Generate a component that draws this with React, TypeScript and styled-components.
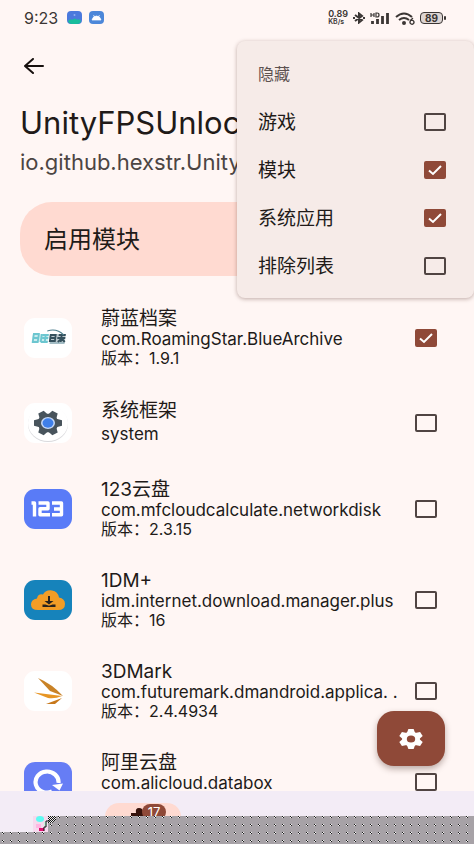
import React, { useState } from "react";
import styled, { createGlobalStyle } from "styled-components";

const fonts = `Inter, "Noto Sans CJK SC", sans-serif`;

const Global = createGlobalStyle`
  *, *::before, *::after { box-sizing: border-box; }
  body { margin: 0; background: #fff6f4; color: #211a18; font-family: ${fonts}; }
  h1, h2, p, ul { margin: 0; padding: 0; font-weight: 400; }
  button, input { font: inherit; color: inherit; }
`;

const Screen = styled.div`
  position: relative;
  display: flex;
  flex-direction: column;
  height: 100vh;
  overflow: hidden;
`;

const StatusBar = styled.header`
  display: flex;
  align-items: center;
  flex: none;
  gap: 8px;
  height: 36px;
  padding: 0 28px 0 24px;
  color: #3b3634;
`;

const Clock = styled.time`
  font-size: 16px;
  margin-right: 1px;
`;

const Spacer = styled.span`
  flex: 1;
`;

const Speed = styled.span`
  display: flex;
  flex-direction: column;
  font-size: 9px;
  font-weight: 600;
  line-height: 8px;
`;

const SpeedUnit = styled.small`
  font-size: 7px;
  line-height: 8px;
`;

const StatusIcons = styled.div`
  display: flex;
  align-items: center;
  gap: 5px;
`;

const Battery = styled.span`
  position: relative;
  display: flex;
  align-items: center;
  justify-content: center;
  width: 23px;
  height: 12px;
  margin-right: 3px;
  border: 1px solid #3b3634;
  border-radius: 4px;
  background: #ddd5d3;
  font-size: 10px;
  font-weight: 700;
  line-height: 10px;
  &::after {
    content: "";
    position: absolute;
    right: -4px;
    top: 3px;
    width: 2px;
    height: 4px;
    border-radius: 1px;
    background: #3b3634;
  }
`;

const TopBar = styled.nav`
  display: flex;
  align-items: center;
  flex: none;
  height: 60px;
  padding: 0 20px;
`;

const BackButton = styled.button`
  display: grid;
  place-items: center;
  width: 28px;
  height: 28px;
  padding: 0;
  border: 0;
  background: none;
`;

const Heading = styled.section`
  flex: none;
  padding: 8px 20px 0;
  white-space: nowrap;
  overflow: hidden;
`;

const Title = styled.h1`
  font-size: 31px;
  line-height: 38px;
`;

const Subtitle = styled.p`
  font-size: 22px;
  line-height: 40px;
  color: #4c4543;
`;

const EnableCard = styled.button`
  flex: none;
  height: 74px;
  margin: 20px 20px 0;
  padding: 0 24px 4px;
  border: 0;
  border-radius: 32px;
  background: #ffdad1;
  text-align: left;
  font-size: 24px;
`;

const AppList = styled.ul`
  flex: 1;
  min-height: 0;
  overflow: hidden;
  padding-top: 16px;
  list-style: none;
`;

const AppRow = styled.li``;

const AppLabel = styled.label<{ $short?: boolean }>`
  display: flex;
  align-items: center;
  height: ${(p) => (p.$short ? 80 : 91)}px;
  padding: 0 37px 0 24px;
`;

const AppInfo = styled.span`
  flex: 1;
  min-width: 0;
  margin: 0 10px 0 29px;
  display: flex;
  flex-direction: column;
`;

const AppName = styled.span`
  font-size: 19px;
  line-height: 22px;
`;

const AppMeta = styled.span<{ $tall?: boolean }>`
  overflow: hidden;
  text-overflow: ellipsis;
  white-space: nowrap;
  font-size: ${(p) => (p.$tall === undefined ? 16 : 17)}px;
  line-height: ${(p) => (p.$tall ? 24 : 19)}px;
`;

const Check = styled.input`
  appearance: none;
  flex: none;
  width: 22px;
  height: 18px;
  margin: 0;
  border: 2px solid #504442;
  border-radius: 2px;
  background: transparent;
  &:checked {
    border-color: #8f4938;
    background: #8f4938 url("data:image/svg+xml,%3Csvg xmlns='http://www.w3.org/2000/svg' viewBox='0 0 18 14'%3E%3Cpath d='M3 7.5l4 3.5 8-8' fill='none' stroke='white' stroke-width='2'/%3E%3C/svg%3E") center / 18px 14px no-repeat;
  }
`;

const AppIcon = styled.svg`
  flex: none;
  width: 48px;
  height: 40px;
`;

const Menu = styled.div`
  position: absolute;
  top: 41px;
  right: 0;
  width: 237px;
  padding: 10px 28px 8px 21px;
  border-radius: 8px;
  background: #f6ebe8;
  box-shadow: 0 1px 4px rgba(70, 30, 20, 0.35);
`;

const MenuTitle = styled.h2`
  font-size: 16px;
  line-height: 47px;
  color: #5d5250;
`;

const MenuItem = styled.label`
  display: flex;
  align-items: center;
  justify-content: space-between;
  height: 48px;
  font-size: 19px;
`;

const MenuText = styled.span`
  padding-bottom: 3px;
`;

const Fab = styled.button`
  position: absolute;
  right: 29px;
  bottom: 78px;
  display: grid;
  place-items: center;
  width: 68px;
  height: 55px;
  padding: 0;
  border: 0;
  border-radius: 17px;
  background: #8f4938;
  box-shadow: 0 3px 6px rgba(60, 30, 20, 0.35);
`;

const BottomNav = styled.nav`
  position: relative;
  display: flex;
  flex: none;
  height: 53px;
  padding: 12px 105px 0;
  background: #f3ecf6;
`;

const NavPill = styled.button`
  position: relative;
  width: 76px;
  height: 28px;
  padding: 0;
  border: 0;
  border-radius: 14px;
  background: #ffdad1;
`;

const NavIcon = styled.svg`
  position: absolute;
  left: 24px;
  top: 4px;
`;

const Badge = styled.span`
  position: absolute;
  left: 37px;
  top: 1px;
  width: 24px;
  height: 16px;
  border-radius: 8px;
  background: #8f4938;
  color: #fff;
  font-size: 13px;
  line-height: 16px;
`;

const Static = styled.svg`
  position: absolute;
  left: 0;
  bottom: 0;
  width: 100%;
  height: 28px;
`;

const Gear = ({ fill, hole, turn = 0 }: { fill: string; hole: string; turn?: number }) => (
  <>
    <g fill={fill} transform={`rotate(${turn})`}>
      <circle r="7.400" />
      {[0, 60, 120].map((a) => (
        <path key={a} transform={`rotate(${a})`} d="M-2.200-10h4.400l1.200 4v12l-1.200 4h-4.400l-1.200-4V-6z" />
      ))}
    </g>
    <circle r="3.500" fill={hole} />
  </>
);

const art: Record<string, React.ReactNode> = {
  archive: (
    <>
      <rect width="48" height="40" rx="11" fill="#fff" />
      <g transform="translate(9 15) skewX(-8)" fill="none">
        <path fill="#a5e0e3" d="M0 1h16v8H0z" opacity=".6" />
        <path fill="#8fa3ab" d="M17 1h16v8H17z" opacity=".6" />
        <path strokeWidth="1.800" stroke="#6cc6d0" d="M1 1h5v8H1zM1 5h5M9 1v8M10 2h6M10 5h6M9 9h7M13 1v8" />
        <path strokeWidth="1.800" stroke="#35505c" d="M18 2h5v6h-5zM18 5h5M26 2h7M25 5h8M29 1v8M26 9l3-3M33 9l-3-3" />
        <path strokeWidth="1" stroke="#4b7c8b" d="M14-2q9-3 17 4M18 10h15" />
      </g>
    </>
  ),
  system: (
    <>
      <rect width="48" height="40" rx="11" fill="#fff" />
      <ellipse cx="24" cy="21" rx="20" ry="18" fill="#d9d9dc" />
      <ellipse cx="24" cy="20" rx="20" ry="18" fill="#fff" />
      <g transform="translate(24 20) scale(1.400 1.250)"><Gear fill="#48545c" hole="#fff" turn={30} /></g>
      <ellipse cx="24" cy="20" rx="7" ry="6" fill="#c6d9f8" />
      <ellipse cx="24" cy="20" rx="5.500" ry="4.700" fill="#3f7fe8" />
    </>
  ),
  pan123: (
    <>
      <rect width="48" height="40" rx="11" fill="#597bf7" />
      <path d="M7.500 14H10.500V27.500M14.500 14h9.500v5.800h-8v6h10M28 14h9.500v11.800h-9.500M30 20h8" fill="none" stroke="#fff" strokeWidth="3.400" strokeLinejoin="round" />
    </>
  ),
  idm: (
    <>
      <rect width="48" height="40" rx="11" fill="#1683bb" />
      <path d="M14 30q-7 0-7-5.500 0-5 6-6 1-5 6-4 3-5 9-4 6 1 7 7 6 1 6 6.500 0 6-7 6z" fill="#f29d26" />
      <path d="M24 16h2v5h3.500L25 24.500 20.500 21H24zM18.500 24.500h3l3.500 1.200 3.500-1.200h3V27h-13z" fill="#28231d" />
    </>
  ),
  mark: (
    <>
      <rect width="48" height="40" rx="11" fill="#fff" />
      <path d="M14 7q14 6 25 18l-13-5z" fill="#c98226" />
      <path d="M10 21.500l28 3.500q-7 3-14 2z" fill="#e79524" />
      <path d="M22 33l16-6-7 6z" fill="#c7781b" />
    </>
  ),
  ali: (
    <>
      <rect width="48" height="40" rx="11" fill="#667df5" />
      <path d="M28 29.500a11.500 10.500 0 1 1 6.500-8.500" fill="none" stroke="#fff" strokeWidth="4.200" />
      <path d="M28 23l11-1.500-3.500 7z" fill="#fff" />
    </>
  ),
};

type App = { icon: string; name: string; id: string; version?: string; checked?: boolean };
const apps: App[] = [
  { icon: "archive", name: "蔚蓝档案", id: "com.RoamingStar.BlueArchive", version: "1.9.1", checked: true },
  { icon: "system", name: "系统框架", id: "system" },
  { icon: "pan123", name: "123云盘", id: "com.mfcloudcalculate.networkdisk", version: "2.3.15" },
  { icon: "idm", name: "1DM+", id: "idm.internet.download.manager.plus", version: "16" },
  { icon: "mark", name: "3DMark", id: "com.futuremark.dmandroid.applica. .", version: "2.4.4934" },
  { icon: "ali", name: "阿里云盘", id: "com.alicloud.databox", version: "" },
];

const filters = [
  { label: "游戏", on: false },
  { label: "模块", on: true },
  { label: "系统应用", on: true },
  { label: "排除列表", on: false },
];

export default function App() {
  const [enabled, setEnabled] = useState(true);
  return (
    <Screen>
      <Global />
      <StatusBar>
        <Clock>9:23</Clock>
        <svg width="38" height="14" viewBox="0 0 38 14" aria-hidden="true">
          <rect width="15" height="13" rx="4" fill="#4b79dd" />
          <path d="M1 10q2-3 4-1 3-3 5 0 2-2 4 1-1 3-4 3H5q-3 0-4-3" fill="#19bd9c" />
          <circle cx="7.500" cy="4" r="1" fill="#8fb0f0" />
          <rect x="22" width="15" height="13" rx="4" fill="#4c87d9" />
          <path d="M25 9q1-4 4.500-4T34 9zM26.500 4l1 2m5-2-1 2" fill="#fff" stroke="#fff" strokeWidth=".7" />
        </svg>
        <Spacer />
        <StatusIcons>
          <Speed>0.89<SpeedUnit>KB/s</SpeedUnit></Speed>
          <svg width="12" height="12" viewBox="0 0 12 12" fill="none" stroke="currentColor" strokeWidth="2" aria-hidden="true">
            <path d="M2 3l7 5-3 2.500v-9L9 4 2 9M0 6h2m8 0h2" />
          </svg>
          <svg width="20" height="13" viewBox="0 0 20 13" fill="none" stroke="currentColor" aria-hidden="true">
            <path strokeWidth="1.200" d="M1 1v4M4 1v4M1 3h3M6 1v4h1q2 0 2-2T7 1z" />
            <path strokeWidth="2.800" d="M2.500 9v3M7.500 7v5M12.500 4v8M17.500 1v11" />
          </svg>
          <svg width="20" height="13" viewBox="0 0 20 13" fill="none" stroke="currentColor" strokeWidth="2" aria-hidden="true">
            <path d="M1 5q8-7 16 0M4 8q5-4 10 0" />
            <circle cx="9" cy="11" r="1" />
            <path strokeWidth="1.400" d="M18 6q-3 2-3 4a2 2 0 1 0 1-1.500" />
          </svg>
          <Battery>89</Battery>
        </StatusIcons>
      </StatusBar>
      <TopBar>
        <BackButton aria-label="返回">
          <svg width="20" height="16" viewBox="0 0 20 16" fill="none" stroke="#17100e" strokeWidth="2" strokeLinecap="round" strokeLinejoin="round">
            <path d="M9 1L1 8l8 7M1 8h18" />
          </svg>
        </BackButton>
      </TopBar>
      <Heading>
        <Title>UnityFPSUnlocker</Title>
        <Subtitle>io.github.hexstr.UnityFPSUnlocker</Subtitle>
      </Heading>
      <EnableCard aria-pressed={enabled} onClick={() => setEnabled(!enabled)}>启用模块</EnableCard>
      <AppList>
        {apps.map((a) => {
          const short = a.version === undefined;
          return (
            <AppRow key={a.icon}>
              <AppLabel $short={short}>
                <AppIcon viewBox="0 0 48 40" aria-hidden="true">{art[a.icon]}</AppIcon>
                <AppInfo>
                  <AppName>{a.name}</AppName>
                  <AppMeta $tall={short}>{a.id}</AppMeta>
                  {!short && <AppMeta>版本：{a.version}</AppMeta>}
                </AppInfo>
                <Check type="checkbox" defaultChecked={a.checked} />
              </AppLabel>
            </AppRow>
          );
        })}
      </AppList>
      <BottomNav>
        <NavPill aria-label="模块">
          <NavIcon width="24" height="20" viewBox="0 0 24 20" aria-hidden="true">
            <path d="M2 6h5q-1-5 3-5t4 4h6v14H2z" fill="#37120b" />
          </NavIcon>
          <Badge>17</Badge>
        </NavPill>
        <Static aria-hidden="true">
          <defs>
            <pattern id="dots" width="8" height="8" patternUnits="userSpaceOnUse">
              <rect width="8" height="8" fill="#a7a2a7" />
              <path d="M2 0h1v1H2zM3 1h1v1H3z" fill="#1c1c1c" />
              <path d="M3 0h1v1H3zM2 1h1v1H2z" fill="#f4f4f4" />
            </pattern>
            <pattern id="checks" width="2" height="2" patternUnits="userSpaceOnUse">
              <rect width="2" height="2" fill="#eee" />
              <path d="M0 0h1v1H0zM1 1h1v1H1z" fill="#111" />
            </pattern>
          </defs>
          <rect x="48" width="100%" height="28" fill="url(#dots)" />
          <rect y="16" width="100%" height="12" fill="url(#dots)" />
          <rect x="33" y="0" width="15" height="16" fill="#f6d9ee" />
          <ellipse cx="40" cy="3" rx="4" ry="3" fill="#5ffbf2" />
          <path d="M36 8h5v4h-5z" fill="#ffb6e2" />
          <path d="M39 12h5v3h-5z" fill="#e0106f" />
          <path d="M44 6h3v4h-3z" fill="#c4f5dc" />
          <path d="M48 0h8v4l-4 3h-4z" fill="url(#checks)" />
          <path d="M50 5h-4v6h-2v4" fill="none" stroke="#111" strokeWidth="1" />
        </Static>
      </BottomNav>
      <Menu>
        <MenuTitle>隐藏</MenuTitle>
        {filters.map((f) => (
          <MenuItem key={f.label}>
            <MenuText>{f.label}</MenuText>
            <Check type="checkbox" defaultChecked={f.on} />
          </MenuItem>
        ))}
      </Menu>
      <Fab aria-label="设置">
        <svg width="26" height="22" viewBox="-13 -11 26 22" aria-hidden="true">
          <g transform="scale(1.200 1)"><Gear fill="#fff" hole="#8f4938" /></g>
        </svg>
      </Fab>
    </Screen>
  );
}
